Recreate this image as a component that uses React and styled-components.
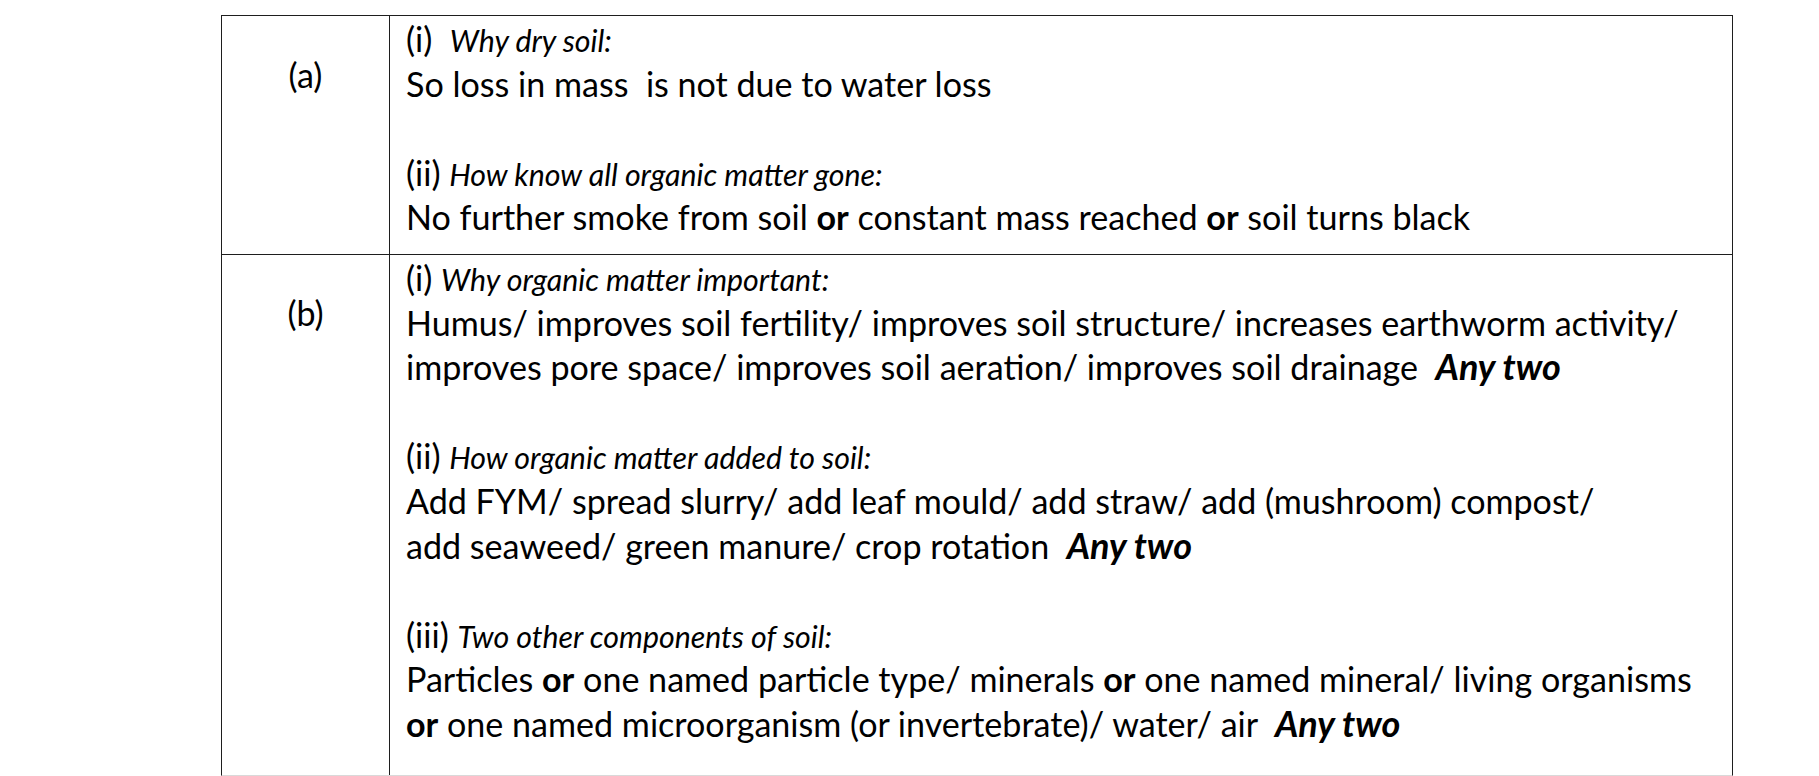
import React from "react";
import styled, { createGlobalStyle } from "styled-components";

const GlobalStyle = createGlobalStyle`
  body {
    margin: 0;
    background: #fff;
    color: #000;
    font-family: Lato, "Open Sans", sans-serif;
  }
`;

const Page = styled.div`
  padding: 15px 0 0 221px;
`;

const Table = styled.div`
  width: 1512px;
  box-sizing: border-box;
  border: 1px solid #1e1e1e;
  border-bottom-color: #d9d9d9;
`;

const Row = styled.div`
  display: grid;
  grid-template-columns: 168px 1fr;
  border-bottom: ${(p) => (p.last ? "none" : "1px solid #1e1e1e")};
`;

const Label = styled.div`
  box-sizing: border-box;
  border-right: 1px solid #1e1e1e;
  text-align: center;
  font-size: 34px;
  line-height: 44.6px;
  padding-top: ${(p) => p.top}px;
`;

const Answer = styled.div`
  padding: 1px 0 ${(p) => p.bottom}px 16px;
`;

const Part = styled.div`
  & + & {
    margin-top: 44.6px;
  }
`;

const Line = styled.div`
  font-size: 34.1px;
  line-height: 44.6px;
  height: 44.6px;
  white-space: pre;
`;

const Prompt = styled.span`
  font-style: italic;
  font-size: 30.3px;
  line-height: 1;
`;

const Or = styled.b`
  font-weight: 700;
`;

const AnyTwo = styled.b`
  font-weight: 700;
  font-style: italic;
  font-size: 36px;
  line-height: 1;
`;

export default function App() {
  return (
    <>
      <GlobalStyle />
      <Page>
        <Table>
          <Row>
            <Label top={37}>(a)</Label>
            <Answer bottom={14}>
              <Part>
                <Line>
                  (i)  <Prompt>Why dry soil:</Prompt>
                </Line>
                <Line>So loss in mass  is not due to water loss</Line>
              </Part>
              <Part>
                <Line>
                  (ii) <Prompt>How know all organic matter gone:</Prompt>
                </Line>
                <Line>
                  No further smoke from soil <Or>or</Or> constant mass reached <Or>or</Or> soil turns black
                </Line>
              </Part>
            </Answer>
          </Row>
          <Row last>
            <Label top={36}>(b)</Label>
            <Answer bottom={28}>
              <Part>
                <Line>
                  (i) <Prompt>Why organic matter important:</Prompt>
                </Line>
                <Line>
                  Humus/ improves soil fertility/ improves soil structure/ increases earthworm activity/
                </Line>
                <Line>
                  improves pore space/ improves soil aeration/ improves soil drainage  <AnyTwo>Any two</AnyTwo>
                </Line>
              </Part>
              <Part>
                <Line>
                  (ii) <Prompt>How organic matter added to soil:</Prompt>
                </Line>
                <Line>Add FYM/ spread slurry/ add leaf mould/ add straw/ add (mushroom) compost/</Line>
                <Line>
                  add seaweed/ green manure/ crop rotation  <AnyTwo>Any two</AnyTwo>
                </Line>
              </Part>
              <Part>
                <Line>
                  (iii) <Prompt>Two other components of soil:</Prompt>
                </Line>
                <Line>
                  Particles <Or>or</Or> one named particle type/ minerals <Or>or</Or> one named mineral/ living organisms
                </Line>
                <Line>
                  <Or>or</Or> one named microorganism (or invertebrate)/ water/ air  <AnyTwo>Any two</AnyTwo>
                </Line>
              </Part>
            </Answer>
          </Row>
        </Table>
      </Page>
    </>
  );
}
